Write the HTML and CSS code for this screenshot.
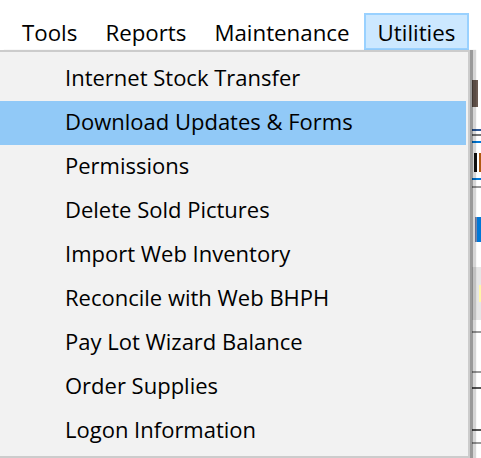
FILE: index.html
```html
<!DOCTYPE html>
<html>
<head>
<meta charset="utf-8">
<link rel="stylesheet" href="styles.css">
</head>
<body>
<div class="menubar">
  <div class="mitem">Tools</div>
  <div class="mitem">Reports</div>
  <div class="mitem">Maintenance</div>
  <div class="mitem active">Utilities</div>
</div>
<div class="content">
  <div class="strip">
    <div class="frag f-t"></div>
    <div class="frag f-blue1"></div>
    <div class="frag f-gray1"></div>
    <div class="frag f-blue2"></div>
    <div class="frag f-dark"></div>
    <div class="frag f-blue3"></div>
    <div class="frag f-gray2"></div>
    <div class="frag f-f"></div>
    <div class="frag f-panel"><div class="f-yellow"></div></div>
    <div class="frag f-gray3"></div>
    <div class="frag f-gray4"></div>
    <div class="frag f-dark2"></div>
    <div class="frag f-dark3"></div>
    <div class="frag f-gray5"></div>
  </div>
</div>
<div class="dropdown">
  <div class="ditem">Internet Stock Transfer</div>
  <div class="ditem hover">Download Updates &amp; Forms</div>
  <div class="ditem">Permissions</div>
  <div class="ditem">Delete Sold Pictures</div>
  <div class="ditem">Import Web Inventory</div>
  <div class="ditem">Reconcile with Web BHPH</div>
  <div class="ditem">Pay Lot Wizard Balance</div>
  <div class="ditem">Order Supplies</div>
  <div class="ditem">Logon Information</div>
</div>
</body>
</html>
```
FILE: styles.css
```css
html, body {
  margin: 0;
  padding: 0;
  width: 481px;
  height: 458px;
  overflow: hidden;
  background: #ffffff;
  font-family: "Open Sans", "Noto Sans", "Liberation Sans", sans-serif;
  font-size: 22px;
  color: #000;
}

.menubar {
  display: flex;
  height: 50px;
  padding: 13px 0 0 8px;
  box-sizing: border-box;
  background: #fff;
  font-size: 22.3px;
}

.mitem {
  height: 37px;
  line-height: 35px;
  padding: 0 12px;
  border: 2px solid transparent;
  box-sizing: border-box;
  white-space: nowrap;
}

.mitem.active {
  background: #cce8ff;
  border-color: #99d1ff;
}

.content {
  display: flex;
  justify-content: flex-end;
  height: 408px;
}

.strip {
  width: 11px;
  display: flex;
  flex-direction: column;
  align-items: flex-end;
  background: #fff;
}

.frag { width: 9px; flex: none; }
.f-t { margin-top: 30px; height: 27px; width: 6px; background: #6a5a52; align-self: flex-start; margin-left: 2px; }
.f-blue1 { margin-top: 22px; height: 2px; background: #2b5797; }
.f-gray1 { margin-top: 3px; height: 2px; background: #777; }
.f-blue2 { margin-top: 5px; height: 2px; background: #0078d7; }
.f-dark { margin-top: 10px; height: 19px; width: 7px; background: linear-gradient(90deg, #111 0 3px, #fff 3px 5px, #b05a10 5px); }
.f-blue3 { margin-top: 6px; height: 2px; background: #0078d7; }
.f-gray2 { margin-top: 6px; height: 2px; background: #999; }
.f-f { margin-top: 29px; height: 25px; width: 6px; background: linear-gradient(90deg, #7a8ab0 0 2px, #0078d7 2px); }
.f-panel { margin-top: 25px; height: 53px; background: #e6e6e6; display: flex; justify-content: flex-end; align-items: flex-start; }
.f-yellow { margin-top: 18px; width: 2px; height: 17px; background: #fff6a8; }
.f-gray3 { margin-top: 11px; height: 2px; background: #999; }
.f-gray4 { margin-top: 38px; height: 2px; background: #999; }
.f-dark2 { margin-top: 14px; height: 2px; background: #555; }
.f-dark3 { margin-top: 40px; height: 2px; background: #555; }
.f-gray5 { margin-top: 11px; height: 2px; background: #999; }

.dropdown {
  position: absolute;
  left: -2px;
  top: 50px;
  width: 472px;
  box-sizing: border-box;
  background: #f2f2f2;
  border: 2px solid #cccccc;
  padding: 5px 2px 3px 0;
  box-shadow: 3px 0 0 rgba(0,0,0,0.28), 6px 0 1px rgba(0,0,0,0.16);
}

.ditem {
  height: 44px;
  line-height: 40px;
  padding-left: 65px;
  padding-bottom: 4px;
  box-sizing: border-box;
  white-space: nowrap;
}

.ditem.hover {
  background: #91c9f7;
}
```
